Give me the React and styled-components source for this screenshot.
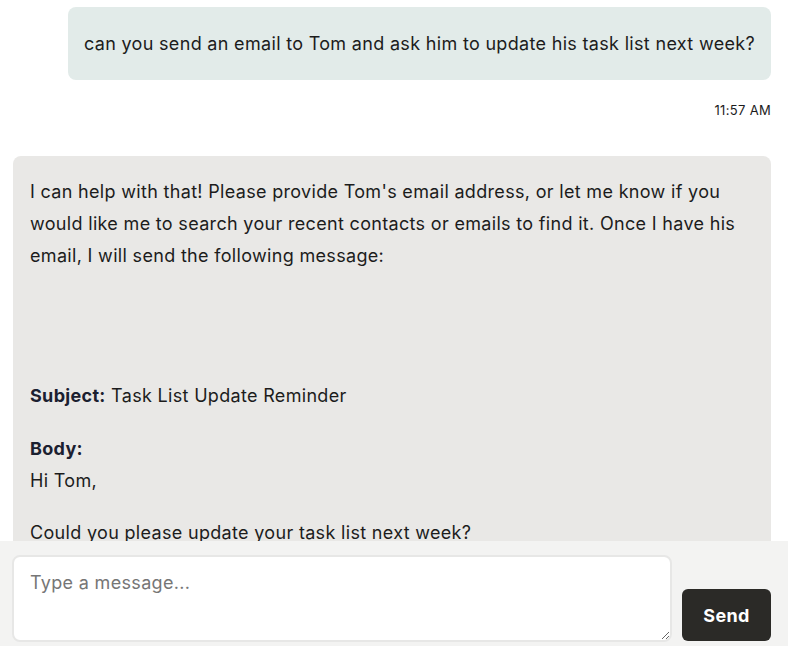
import styled, { createGlobalStyle } from "styled-components";

const GlobalStyle = createGlobalStyle`
    * { box-sizing: border-box; }
    html, body { margin: 0; padding: 0; background: #ffffff; }
    body {
        font-family: Inter, "Noto Sans", sans-serif;
        color: #1c1c1c;
        letter-spacing: 0.32px;
    }
`;

const ChatWindow = styled.div`
    height: 646px;
    display: flex;
    flex-direction: column;
    overflow: hidden;
`;

const MessageList = styled.div`
    flex: 1;
    min-height: 0;
    overflow: hidden;
    padding: 7px 17px 0 13px;
    display: flex;
    flex-direction: column;
`;

const UserBubble = styled.div`
    align-self: flex-end;
    background-color: #e2ebe9;
    border-radius: 8px;
    padding: 22px 16px;
    font-size: 18px;
    line-height: 29px;
    max-width: 94%;
`;

const Timestamp = styled.div`
    align-self: flex-end;
    font-size: 13px;
    line-height: 16px;
    margin-top: 22px;
    color: #1c1c1c;
`;

const AssistantBubble = styled.div`
    margin-top: 38px;
    background-color: #e9e8e6;
    border-radius: 8px 8px 0 0;
    padding: 20px 17px 20px 17px;
    font-size: 18px;
    line-height: 32px;
`;

const Paragraph = styled.p`
    margin: 0 0 ${(p) => p.$gap || 20}px;
`;

const Label = styled.strong`
    font-weight: 700;
    color: #1b2030;
`;

const InputBar = styled.div`
    flex-shrink: 0;
    height: 105px;
    background-color: #f3f3f2;
    display: flex;
    align-items: flex-end;
    gap: 10px;
    padding: 14px 17px 4px 12px;
`;

const MessageInput = styled.textarea`
    flex: 1;
    height: 87px;
    resize: vertical;
    border: 2px solid #e7e7e6;
    border-radius: 8px;
    background: #ffffff;
    padding: 14px 16px;
    font-family: Inter, "Noto Sans", sans-serif;
    font-size: 18px;
    line-height: 24px;
    letter-spacing: 0.32px;
    color: #1c1c1c;
    outline: none;

    &::placeholder {
        color: #767676;
    }
`;

const SendButton = styled.button`
    width: 89px;
    height: 52px;
    margin-bottom: 1px;
    border: none;
    border-radius: 6px;
    background-color: #2b2a27;
    color: #ffffff;
    font-family: Inter, "Noto Sans", sans-serif;
    font-size: 18px;
    font-weight: 700;
    letter-spacing: 0.32px;
    cursor: pointer;
`;

function App() {
    return (
        <>
            <GlobalStyle />
            <ChatWindow>
                <MessageList>
                    <UserBubble>
                        can you send an email to Tom and ask him to update his task list next week?
                    </UserBubble>
                    <Timestamp>11:57 AM</Timestamp>
                    <AssistantBubble>
                        <Paragraph $gap={108}>
                            I can help with that! Please provide Tom's email address, or let me
                            know if you would like me to search your recent contacts or emails to
                            find it. Once I have his email, I will send the following message:
                        </Paragraph>
                        <Paragraph $gap={21}>
                            <Label>Subject:</Label> Task List Update Reminder
                        </Paragraph>
                        <Paragraph $gap={20}>
                            <Label>Body:</Label>
                            <br />
                            Hi Tom,
                        </Paragraph>
                        <Paragraph>Could you please update your task list next week?</Paragraph>
                        <Paragraph>Thanks!</Paragraph>
                    </AssistantBubble>
                </MessageList>
                <InputBar>
                    <MessageInput placeholder="Type a message..." />
                    <SendButton>Send</SendButton>
                </InputBar>
            </ChatWindow>
        </>
    );
}

export default App;
